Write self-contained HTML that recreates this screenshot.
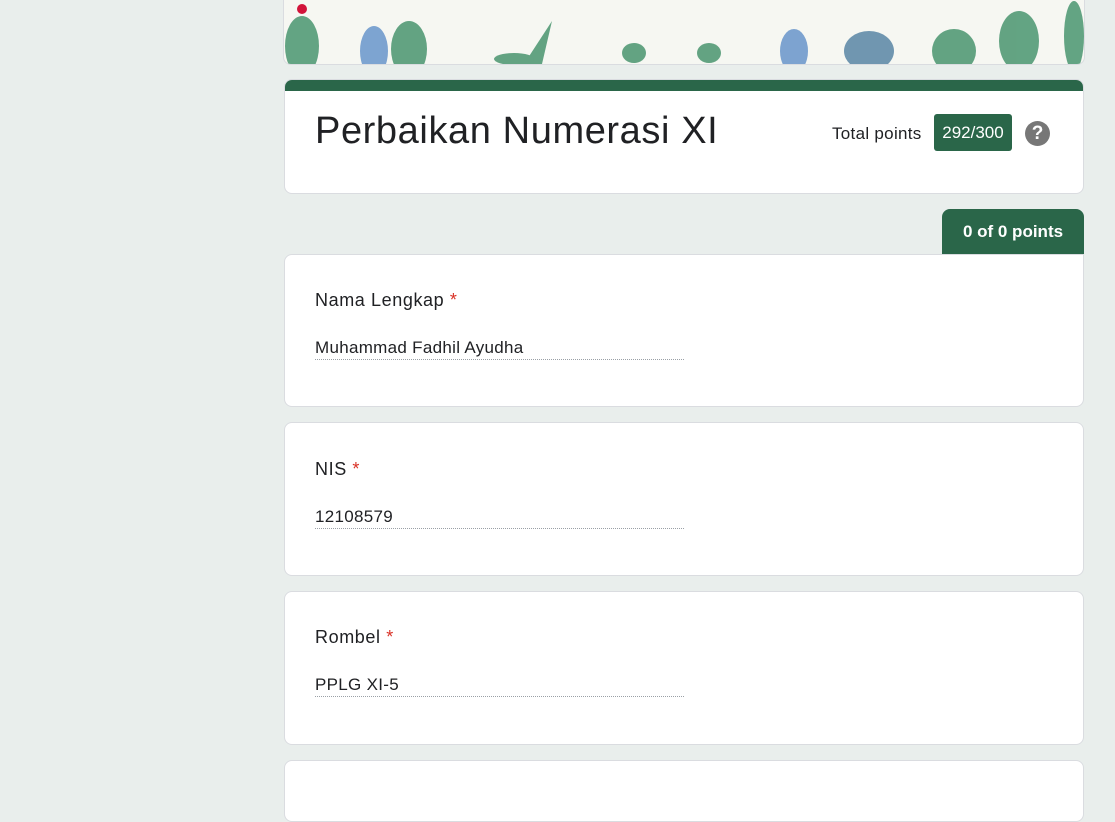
<!DOCTYPE html>
<html><head><style>
body{margin:0;background:#e9eeec;font-family:"Liberation Sans",Roboto,sans-serif;width:1115px;height:767px;overflow:hidden;position:relative;color:#202124}
.card{position:absolute;left:284px;width:798px;background:#fff;border:1px solid #dadce0;border-radius:8px}
.q{font-size:18px;letter-spacing:.6px;position:absolute;left:30px}
.ast{color:#d93025}
.ans{position:absolute;left:30px;width:369px;font-size:17px;letter-spacing:.3px;border-bottom:1px dotted #9aa0a6;padding-bottom:1px}
</style></head><body>
<div style="position:absolute;left:283px;top:-10px;width:800px;height:73px;background:#f6f7f2;border:1px solid #dadce0;border-radius:8px;overflow:hidden">
<svg width="801" height="73" viewBox="0 0 801 73">
<g fill="#3f8f67" opacity=".8">
<ellipse cx="18" cy="55" rx="17" ry="30"/>
<ellipse cx="90" cy="60" rx="14" ry="25" fill="#5f8fc8"/>
<ellipse cx="125" cy="58" rx="18" ry="28"/>
<path d="M240 73 L268 30 L258 73Z"/>
<ellipse cx="230" cy="68" rx="20" ry="6"/>
<ellipse cx="350" cy="62" rx="12" ry="10"/>
<ellipse cx="425" cy="62" rx="12" ry="10"/>
<ellipse cx="510" cy="60" rx="14" ry="22" fill="#5f8fc8"/>
<ellipse cx="585" cy="60" rx="25" ry="20" fill="#4f7fa0"/>
<ellipse cx="670" cy="60" rx="22" ry="22"/>
<ellipse cx="735" cy="50" rx="20" ry="30"/>
<ellipse cx="790" cy="45" rx="10" ry="35"/>
</g>
<circle cx="18" cy="18" r="5" fill="#d2143a"/>
</svg></div>
<div class="card" style="top:79px;height:113px;overflow:hidden">
<div style="height:11px;background:#2a6649"></div>
<div style="position:absolute;left:30px;top:30px;font-size:38px;letter-spacing:.6px">Perbaikan Numerasi XI</div>
<div style="position:absolute;left:547px;top:44px;font-size:17px;letter-spacing:.3px">Total points</div>
<div style="position:absolute;left:649px;top:34px;width:78px;height:37px;background:#2a6649;color:#fff;border-radius:3px;font-size:17px;line-height:37px;text-align:center">292/300</div>
<div style="position:absolute;left:740px;top:41px;width:25px;height:25px;border-radius:50%;background:#777;color:#fff;font-weight:bold;font-size:19px;line-height:25px;text-align:center">?</div>
</div>
<div style="position:absolute;left:942px;top:209px;width:142px;height:45px;background:#2a6649;border-radius:8px 8px 0 0;color:#fff;font-weight:bold;font-size:17px;line-height:45px;text-align:center">0 of 0 points</div>
<div class="card" style="top:254px;height:151px;border-top-right-radius:0">
<div class="q" style="top:35px">Nama Lengkap <span class="ast">*</span></div>
<div class="ans" style="top:83px">Muhammad Fadhil Ayudha</div></div>
<div class="card" style="top:422px;height:152px">
<div class="q" style="top:36px">NIS <span class="ast">*</span></div>
<div class="ans" style="top:84px">12108579</div></div>
<div class="card" style="top:591px;height:152px">
<div class="q" style="top:35px">Rombel <span class="ast">*</span></div>
<div class="ans" style="top:83px">PPLG XI-5</div></div>
<div class="card" style="top:760px;height:60px"></div>
</body></html>
